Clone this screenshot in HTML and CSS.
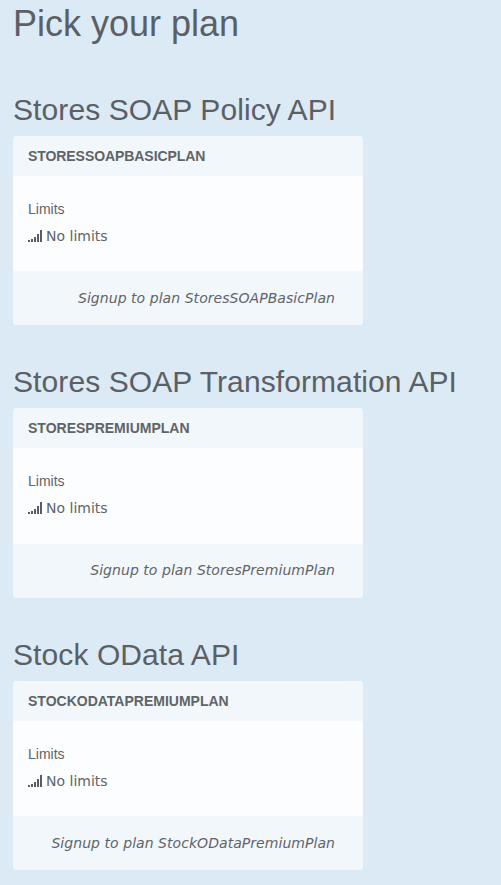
FILE: index.html
```html
<!DOCTYPE html>
<html lang="en">
<head>
<meta charset="utf-8">
<title>Pick your plan</title>
<link rel="stylesheet" href="styles.css">
</head>
<body>
<main class="page">
  <h1 class="title">Pick your plan</h1>
  <section class="service">
    <h2 class="service-name">Stores SOAP Policy API</h2>
    <div class="panel">
      <div class="panel-heading tight">STORESSOAPBASICPLAN</div>
      <div class="panel-body">
        <p class="label">Limits</p>
        <p class="limits"><svg class="signal" viewBox="0 0 14 12" shape-rendering="crispEdges"><path d="M0 10h2v2H0zM3 9h2v3H3zM6 7h2v5H6zM9 4h2v8H9zM12 0h2v12h-2z"/></svg>No limits</p>
      </div>
      <div class="panel-footer"><a class="signup">Signup to plan StoresSOAPBasicPlan</a></div>
    </div>
  </section>
  <section class="service">
    <h2 class="service-name">Stores SOAP Transformation API</h2>
    <div class="panel">
      <div class="panel-heading">STORESPREMIUMPLAN</div>
      <div class="panel-body tall">
        <p class="label">Limits</p>
        <p class="limits"><svg class="signal" viewBox="0 0 14 12" shape-rendering="crispEdges"><path d="M0 10h2v2H0zM3 9h2v3H3zM6 7h2v5H6zM9 4h2v8H9zM12 0h2v12h-2z"/></svg>No limits</p>
      </div>
      <div class="panel-footer raised"><a class="signup">Signup to plan StoresPremiumPlan</a></div>
    </div>
  </section>
  <section class="service">
    <h2 class="service-name">Stock OData API</h2>
    <div class="panel">
      <div class="panel-heading">STOCKODATAPREMIUMPLAN</div>
      <div class="panel-body">
        <p class="label">Limits</p>
        <p class="limits"><svg class="signal" viewBox="0 0 14 12" shape-rendering="crispEdges"><path d="M0 10h2v2H0zM3 9h2v3H3zM6 7h2v5H6zM9 4h2v8H9zM12 0h2v12h-2z"/></svg>No limits</p>
      </div>
      <div class="panel-footer"><a class="signup">Signup to plan StockODataPremiumPlan</a></div>
    </div>
  </section>
</main>
</body>
</html>
```
FILE: styles.css
```css
* { box-sizing: border-box; }
body {
  margin: 0;
  background: #dceaf6;
  color: #606468;
  font: 14px/20px "Liberation Sans", Arial, sans-serif;
}
.page { padding: 4px 13px 0; height: 885px; overflow: hidden; }
h1, h2, p { margin: 0; font-weight: 400; color: #5a6065; }
.title { font-size: 36px; line-height: 40px; }
.service-name { font-size: 30px; line-height: 33px; padding-bottom: 10px; height: 43px; white-space: nowrap; letter-spacing: 0.09px; }
.service { margin-top: 49px; }
.service + .service { margin-top: 40px; }
.panel { width: 350px; border-radius: 4px; background: #fcfdfe; overflow: hidden; }
.panel-heading { height: 40px; padding: 10px 15px; background: #f2f7fb; font-weight: 700; }
.tight { letter-spacing: -0.07px; }
.panel-body { height: 95px; padding: 23px 15px 0; }
.panel-body p { color: #606468; }
.tall { height: 96px; }
.limits { margin-top: 7px; font-family: "DejaVu Sans", sans-serif; display: flex; align-items: center; gap: 4px; }
.signal { width: 14px; height: 12px; fill: #5a5d60; }
.panel-footer { height: 54px; padding: 17px 28px 0; background: #f2f7fb; text-align: right; }
.raised { padding-top: 16px; }
.signup { font-family: "DejaVu Sans", sans-serif; font-style: italic; letter-spacing: 0.05px; }
```
